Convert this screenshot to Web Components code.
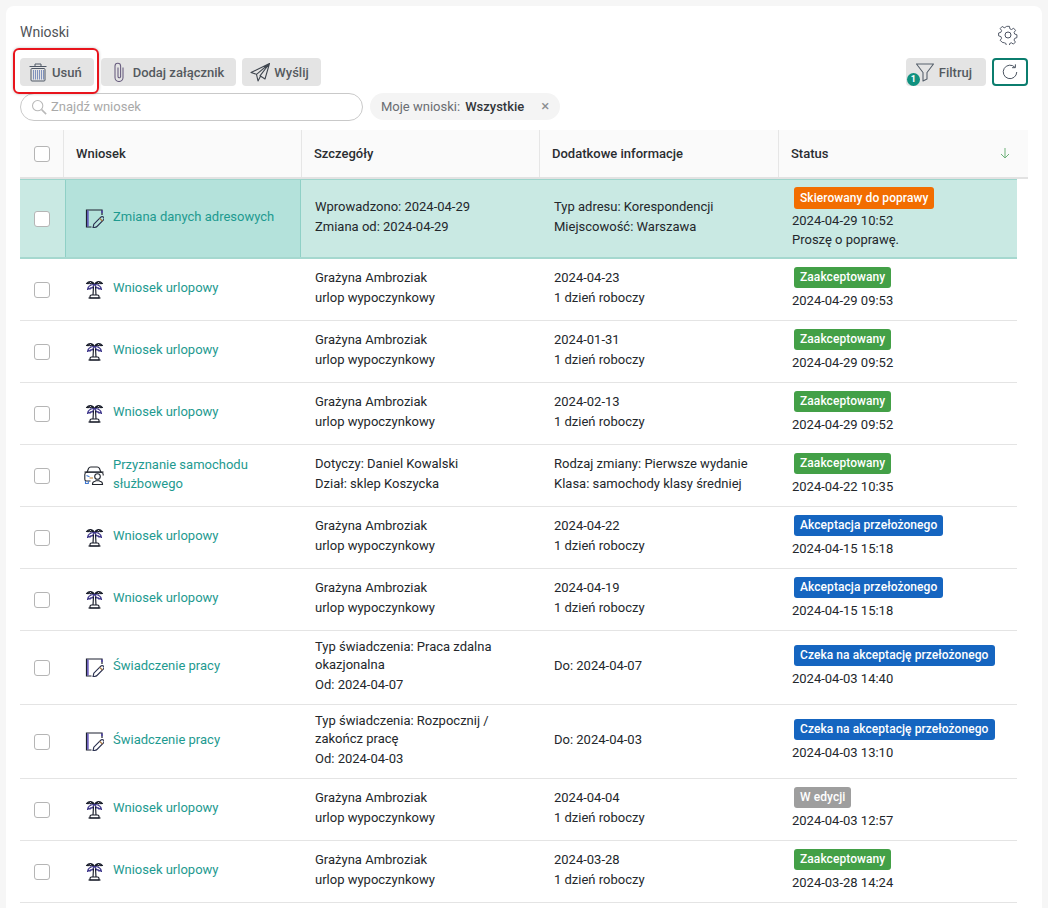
<!DOCTYPE html>
<html lang="pl">
<head>
<meta charset="utf-8">
<title>Wnioski</title>
<style>
  html, body { margin: 0; height: 908px; overflow: hidden; background: #f6f6f6; }
  body { font-family: Roboto, "Liberation Sans", sans-serif; }
</style>
</head>
<body>
<requests-panel>
  <span slot="title">Wnioski</span>
  <tool-button slot="actions" icon="trash" marked>Usuń</tool-button>
  <tool-button slot="actions" icon="clip">Dodaj załącznik</tool-button>
  <tool-button slot="actions" icon="plane">Wyślij</tool-button>
  <tool-button slot="tools" icon="funnel" count="1">Filtruj</tool-button>
  <refresh-button slot="tools"></refresh-button>
  <search-box slot="filters" placeholder="Znajdź wniosek"></search-box>
  <filter-chip slot="filters" label="Moje wnioski:">Wszystkie</filter-chip>
  <requests-table></requests-table>
</requests-panel>

<script>
// Icons are kept in one place: dark outline plus a purple/blue accent, as in the app's icon set.
const ICONS = {
  trash: `<svg viewBox="0 0 20 20" fill="none" stroke="#4f5866" stroke-width="1"><path d="M1.500 4.500h17M7 4.500V2h6v2.500"/><rect x="3" y="6.500" width="14" height="12.500" rx="1"/><path stroke="#7488b8" d="M5.500 8v9.500M7.500 8v9.500M9.500 8v9.500M11.500 8v9.500M13.500 8v9.500M15.500 8v9.500" stroke-width=".9"/></svg>`,
  clip: `<svg viewBox="0 0 20 20" fill="none" stroke="#6a5f80" stroke-width="1.100"><path d="M14 5.500v10a4 4 0 0 1-8 0V4a2.800 2.800 0 0 1 5.600 0v10.500a1.300 1.300 0 0 1-2.600 0V5.500"/></svg>`,
  plane: `<svg viewBox="0 0 20 20" fill="none" stroke="#3f464f" stroke-width="1.100" stroke-linejoin="round"><path d="M19.500 1.500 1 10.500l5.500 1.800zM19.500 1.500l-9.500 12.300 5 3.200zM6.500 12.300 8 19l2.500-4.800"/></svg>`,
  funnel: `<svg viewBox="0 0 20 20" fill="none" stroke="#56606c" stroke-width="1.100" stroke-linejoin="round"><path d="M1.500 2h17l-6.500 8.500v6.500l-4 2v-8.500z"/></svg>`,
  refresh: `<svg viewBox="0 0 20 20" fill="none" stroke="#4a5360" stroke-width="1.100"><path d="M15.500 4.800A7.500 7.500 0 1 0 17.500 10"/><path d="M16 1.500v3.700h-3.700"/></svg>`,
  gear: `<svg viewBox="0 0 20 20" fill="none" stroke="#4a5160" stroke-width="1"><circle cx="10" cy="10" r="3"/><path d="M8.500 1h3l.5 2.600 1.700.8 2.300-1.400 2 2.300-1.500 2.100.6 1.800 2.400.8v3l-2.400.8-.7 1.800 1.500 2.100-2.100 2.200-2.200-1.400-1.700.7-.6 2.600h-3l-.5-2.600-1.700-.7L3.800 18l-2.100-2.200 1.500-2.100-.7-1.800L0 11.100v-3l2.500-.8.700-1.800L1.700 3.400 3.800 1.100 6 2.500l1.800-.8z" transform="translate(.6 .4) scale(.94)"/></svg>`,
  search: `<svg viewBox="0 0 18 18" fill="none" stroke="#b9b9b9" stroke-width="1.200"><circle cx="7.500" cy="7.500" r="5.800"/><path d="m12 12 5 5" stroke-width="1.800"/></svg>`,
  note: `<svg viewBox="0 0 20 20" fill="none" stroke="#1c2130" stroke-width="1.200"><path d="M7.500 19H2.500V2H18v5"/><path stroke="#4f3fb0" stroke-width="1.400" d="M3.900 2.500v16M18 2.500v2.500"/><path stroke="#2a3050" d="m9 20 .8-3.800 7-7a1.500 1.500 0 0 1 2.700 2.700l-7 7z"/><path stroke="#a9763a" d="m15.700 10.300 2.700 2.700"/></svg>`,
  palm: `<svg viewBox="0 0 20 20" fill="none" stroke="#171b28" stroke-width="1.150" stroke-linejoin="round"><path d="M10.500 5.500C9 2 5 1.500 2.500 4.500l1.800.1 1-1 1 1.300 1.200-.9z"/><path d="M10.500 5.500C12 2 16 1.500 18.500 4.500l-1.800.1-1-1-1 1.300-1.200-.9z"/><path stroke="#3a3288" d="M10.500 5.500C7.500 5.500 4 6.800 3.500 10.500l1.500-1.200 1 .8 1-1.600 1 .7z"/><path stroke="#3a3288" d="M10.500 5.500c3 0 6.500 1.300 7 5L16 9.300l-1 .8-1-1.600-1 .7z"/><path d="M9.500 7.500 9 16M11.500 7.500l.5 8.500"/><path d="M6 19v-1.500A1.500 1.500 0 0 1 7.500 16h6a1.500 1.500 0 0 1 1.500 1.500V19z"/><path d="M4.500 19h12"/></svg>`,
  car: `<svg viewBox="0 0 20 20" fill="none" stroke="#22262e" stroke-width="1.100"><path d="M3 7.500 4.500 3.500A2.500 2.500 0 0 1 6.800 2h6.400a2.500 2.500 0 0 1 2.300 1.500L17 7.500"/><path d="M.500 7h19"/><path d="M6.500 16H2.500A1.800 1.800 0 0 1 .8 14.200V9.500a2.200 2.200 0 0 1 2-2.200h14.400a2.200 2.200 0 0 1 2 2.200v1"/><path stroke="#3f78d0" d="M2.500 10.500l3 1.200M1.500 16v2.500h2.800V16"/><path stroke="#c98a3a" d="M5.500 13h3.500"/><circle cx="13.500" cy="11.500" r="2.800"/><path d="M8.500 19.500V19a3 3 0 0 1 2.500-2.800l1-.5h3l1 .5a3 3 0 0 1 2.500 2.800v.5z"/></svg>`
};

// Small helper so every element below reads the same.
function shadow(el, html) {
  el.attachShadow({ mode: 'open' }).innerHTML = html;
}

class RequestsPanel extends HTMLElement {
  connectedCallback() {
    shadow(this, `
      <style>
        :host { display: block; margin: 6px 6px 0; height: 902px; box-sizing: border-box;
                padding: 14px 14px 0; background: #fff; border-radius: 8px 8px 0 0; color: #1f2328; overflow: hidden; }
        .head { display: flex; justify-content: space-between; height: 38px; }
        .title { font-size: 14px; color: #4f5358; line-height: 24px; }
        .gear { width: 20px; height: 20px; margin: 5px 10px 0 0; }
        .bar { display: flex; justify-content: space-between; height: 28px; }
        .group { display: flex; gap: 6px; }
        .filters { display: flex; gap: 7px; margin-top: 7px; height: 28px; margin-bottom: 9px; }
      </style>
      <div class="head"><div class="title"><slot name="title"></slot></div><div class="gear">${ICONS.gear}</div></div>
      <div class="bar">
        <div class="group"><slot name="actions"></slot></div>
        <div class="group"><slot name="tools"></slot></div>
      </div>
      <div class="filters"><slot name="filters"></slot></div>
      <slot></slot>`);
  }
}

class ToolButton extends HTMLElement {
  connectedCallback() {
    const icon = ICONS[this.getAttribute('icon')];
    const count = this.getAttribute('count');
    shadow(this, `
      <style>
        :host { display: block; position: relative; height: 28px; }
        :host([marked]) { margin-right: 1px; }
        .btn { height: 28px; box-sizing: border-box; display: flex; align-items: center; gap: 4px;
               padding: 0 12px 0 8px; background: #e4e4e4; border-radius: 4px;
               font: 500 13px/1 Roboto, sans-serif; color: #555a60; white-space: nowrap; }
        :host([count]) .btn { padding: 0 14px 0 9px; }
        .ico { width: 20px; height: 20px; flex: none; }
        .count { position: absolute; left: 1px; top: 15px; width: 13px; height: 13px; border-radius: 50%;
                 background: #0f917f; color: #fff; font: 700 9px/13px Roboto, sans-serif; text-align: center; }
        .mark { position: absolute; left: -7px; top: -10px; right: -5px; bottom: -8px;
                border: 2px solid #e8141c; border-radius: 6px; box-shadow: 0 0 3px rgba(0,0,0,.25); pointer-events: none; }
      </style>
      <div class="btn"><span class="ico">${icon}</span><slot></slot></div>
      ${count ? `<span class="count">${count}</span>` : ''}
      ${this.hasAttribute('marked') ? '<span class="mark"></span>' : ''}`);
  }
}

class RefreshButton extends HTMLElement {
  connectedCallback() {
    shadow(this, `
      <style>
        :host { display: block; width: 36px; height: 28px; box-sizing: border-box; border: 2px solid #0b7d6e;
                border-radius: 4px; background: #fff; }
        div { width: 18px; height: 18px; margin: 3px auto 0; }
      </style>
      <div>${ICONS.refresh}</div>`);
  }
}

class SearchBox extends HTMLElement {
  connectedCallback() {
    shadow(this, `
      <style>
        :host { display: flex; align-items: center; width: 343px; height: 28px; box-sizing: border-box;
                border: 1px solid #c9c9c9; border-radius: 14px; padding-left: 10px; gap: 4px; }
        .ico { width: 16px; height: 16px; margin-top: -1px; }
        span { font: 13px Roboto, sans-serif; color: #a9a9a9; margin-top: -2px; }
      </style>
      <div class="ico">${ICONS.search}</div><span>${this.getAttribute('placeholder')}</span>`);
  }
}

class FilterChip extends HTMLElement {
  connectedCallback() {
    shadow(this, `
      <style>
        :host { display: flex; align-items: center; height: 27px; border-radius: 14px; background: #f4f4f4;
                padding: 0 11px 0 11px; font: 13px Roboto, sans-serif; color: #6a6d72; white-space: nowrap; }
        b { font-weight: 500; color: #33363a; margin-left: 5px; }
        i { font-style: normal; margin-left: 17px; font-size: 15px; line-height: 1; color: #8a8d90; }
      </style>
      ${this.getAttribute('label')}<b><slot></slot></b><i>×</i>`);
  }
}

class StatusBadge extends HTMLElement {
  connectedCallback() {
    const colors = { orange: '#f26d00', green: '#43a047', blue: '#1565c0', grey: '#9e9e9e' };
    shadow(this, `
      <style>
        :host { display: inline-block; height: 21px; padding: 0 6px; border-radius: 3px; margin-left: 2px;
                background: ${colors[this.getAttribute('tone')]}; color: #fff; letter-spacing: .07px;
                font: 500 12px/21px Roboto, sans-serif; white-space: nowrap; }
        :host([tall]) { height: 22px; line-height: 22px; }
      </style><slot></slot>`);
  }
}

const REQUESTS = [
  { icon: 'note', name: 'Zmiana danych adresowych', details: ['Wprowadzono: 2024-04-29', 'Zmiana od: 2024-04-29'], extra: ['Typ adresu: Korespondencji', 'Miejscowość: Warszawa'], tone: 'orange', status: 'Skierowany do poprawy', date: '2024-04-29 10:52', note: 'Proszę o poprawę.', selected: true },
  { icon: 'palm', name: 'Wniosek urlopowy', details: ['Grażyna Ambroziak', 'urlop wypoczynkowy'], extra: ['2024-04-23', '1 dzień roboczy'], tone: 'green', status: 'Zaakceptowany', date: '2024-04-29 09:53' },
  { icon: 'palm', name: 'Wniosek urlopowy', details: ['Grażyna Ambroziak', 'urlop wypoczynkowy'], extra: ['2024-01-31', '1 dzień roboczy'], tone: 'green', status: 'Zaakceptowany', date: '2024-04-29 09:52' },
  { icon: 'palm', name: 'Wniosek urlopowy', details: ['Grażyna Ambroziak', 'urlop wypoczynkowy'], extra: ['2024-02-13', '1 dzień roboczy'], tone: 'green', status: 'Zaakceptowany', date: '2024-04-29 09:52' },
  { icon: 'car', name: 'Przyznanie samochodu służbowego', details: ['Dotyczy: Daniel Kowalski', 'Dział: sklep Koszycka'], extra: ['Rodzaj zmiany: Pierwsze wydanie', 'Klasa: samochody klasy średniej'], tone: 'green', status: 'Zaakceptowany', date: '2024-04-22 10:35' },
  { icon: 'palm', name: 'Wniosek urlopowy', details: ['Grażyna Ambroziak', 'urlop wypoczynkowy'], extra: ['2024-04-22', '1 dzień roboczy'], tone: 'blue', status: 'Akceptacja przełożonego', date: '2024-04-15 15:18' },
  { icon: 'palm', name: 'Wniosek urlopowy', details: ['Grażyna Ambroziak', 'urlop wypoczynkowy'], extra: ['2024-04-19', '1 dzień roboczy'], tone: 'blue', status: 'Akceptacja przełożonego', date: '2024-04-15 15:18' },
  { icon: 'note', name: 'Świadczenie pracy', details: ['Typ świadczenia: Praca zdalna okazjonalna', 'Od: 2024-04-07'], extra: ['Do: 2024-04-07'], tone: 'blue', status: 'Czeka na akceptację przełożonego', date: '2024-04-03 14:40', tall: true },
  { icon: 'note', name: 'Świadczenie pracy', details: ['Typ świadczenia: Rozpocznij / zakończ pracę', 'Od: 2024-04-03'], extra: ['Do: 2024-04-03'], tone: 'blue', status: 'Czeka na akceptację przełożonego', date: '2024-04-03 13:10', tall: true },
  { icon: 'palm', name: 'Wniosek urlopowy', details: ['Grażyna Ambroziak', 'urlop wypoczynkowy'], extra: ['2024-04-04', '1 dzień roboczy'], tone: 'grey', status: 'W edycji', date: '2024-04-03 12:57' },
  { icon: 'palm', name: 'Wniosek urlopowy', details: ['Grażyna Ambroziak', 'urlop wypoczynkowy'], extra: ['2024-03-28', '1 dzień roboczy'], tone: 'green', status: 'Zaakceptowany', date: '2024-03-28 14:24' }
];

class RequestsTable extends HTMLElement {
  connectedCallback() {
    shadow(this, `
      <style>
        :host { display: block; }
        .head { display: grid; grid-template-columns: 43px 238px 238px 239px 250px; height: 47px;
                background: #fafafa; border-bottom: 2px solid #e2e2e2; }
        .head > div { display: flex; align-items: center; padding-left: 12px; border-left: 1px solid #e6e6e6;
                      font: 500 13px Roboto, sans-serif; color: #2a2d31; position: relative; }
        .head > div:first-child { border-left: 0; padding-left: 14px; }
        .sort { position: absolute; right: 17px; top: 17px; width: 12px; height: 12px; }
      </style>
      <div class="head">
        <div><check-box></check-box></div>
        <div>Wniosek</div><div>Szczegóły</div><div>Dodatkowe informacje</div>
        <div>Status<svg class="sort" viewBox="0 0 12 12" fill="none" stroke="#6fb27a" stroke-width="1"><path d="M6 1v10M2 7l4 4 4-4"/></svg></div>
      </div>
      ${REQUESTS.map((r, i) => `<request-row data-i="${i}"></request-row>`).join('')}`);
  }
}

class RequestRow extends HTMLElement {
  connectedCallback() {
    const r = REQUESTS[this.dataset.i];
    const lines = list => list.map(t => `<p>${t}</p>`).join('');
    const height = r.selected ? 80 : r.tall ? 74 : 62;
    shadow(this, `
      <style>
        :host { display: block; width: 997px; }
        .row { display: grid; grid-template-columns: 44px 238px 238px 239px 238px; height: ${height}px; box-sizing: border-box;
               border-bottom: 1px solid #e4e4e4; font: 13px/18.500px Roboto, sans-serif; color: #23272b; }
        .row.sel { background: #c9e9e3; border-top: 1px solid #9ed5cc; border-bottom: 2px solid #a5d8cf; }
        .cell { display: flex; flex-direction: column; justify-content: center; padding: 0 18px 2px 13px; min-width: 0; }
        .check { padding: 0 0 0 14px; }
        .name { flex-direction: row; align-items: center; justify-content: flex-start; gap: 9px; padding-left: 20px; color: #1e9a90; }
        .sel .name { background: #b4e2db; border: 1px solid #8fd0c6; border-width: 0 1px; padding-left: 18px; margin: 0 1px; }
        .ico { width: 20px; height: 20px; flex: none; }
        p { margin: 0 0 1px; }
        .extra { padding-left: 14px; }
        .status { padding: 0 0 1.500px 13px; }
        .status p { margin: 4px 0 0; }
        .sel .status { padding: 1px 0 1.500px 13px; }
        .sel .status p { margin-top: 3.500px; }
        .sel .status p + p { margin-top: .5px; }
        status-badge { align-self: flex-start; }
      </style>
      <div class="row ${r.selected ? 'sel' : ''}">
        <div class="cell check"><check-box></check-box></div>
        <div class="cell name"><span class="ico">${ICONS[r.icon]}</span><a>${r.name}</a></div>
        <div class="cell">${lines(r.details)}</div>
        <div class="cell extra">${lines(r.extra)}</div>
        <div class="cell status"><status-badge tone="${r.tone}" ${r.selected ? 'tall' : ''}>${r.status}</status-badge><p>${r.date}</p>${r.note ? `<p>${r.note}</p>` : ''}</div>
      </div>`);
  }
}

class CheckBox extends HTMLElement {
  connectedCallback() {
    shadow(this, `<style>:host { display: block; width: 16px; height: 16px; box-sizing: border-box;
      border: 1.500px solid #b5b5b5; border-radius: 3px; background: #fff; }</style>`);
  }
}

customElements.define('requests-panel', RequestsPanel);
customElements.define('tool-button', ToolButton);
customElements.define('refresh-button', RefreshButton);
customElements.define('search-box', SearchBox);
customElements.define('filter-chip', FilterChip);
customElements.define('status-badge', StatusBadge);
customElements.define('check-box', CheckBox);
customElements.define('requests-table', RequestsTable);
customElements.define('request-row', RequestRow);
</script>
</body>
</html>
